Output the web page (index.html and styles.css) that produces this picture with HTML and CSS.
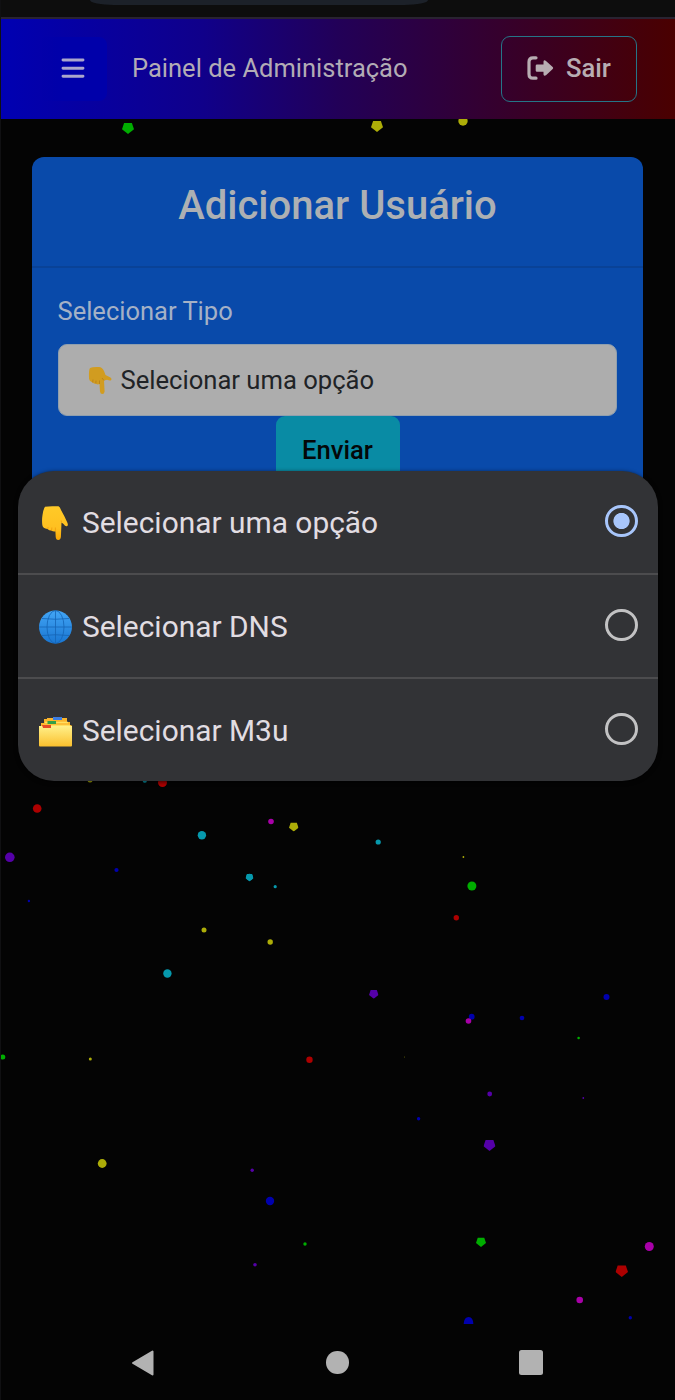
FILE: index.html
```
<!DOCTYPE html>
<html lang="pt-BR">
<head>
<meta charset="utf-8">
<title>Painel de Administração</title>
<link rel="stylesheet" href="styles.css">
</head>
<body>
<svg width="0" height="0" class="defs" aria-hidden="true">
  <defs>
    <linearGradient id="skin" x1="0" y1="0" x2="0" y2="1"><stop offset="0" stop-color="#ffca28"/><stop offset=".65" stop-color="#ffc020"/><stop offset="1" stop-color="#f9a704"/></linearGradient>
    <linearGradient id="sea" x1="0" y1="0" x2="0" y2="1"><stop offset="0" stop-color="#42a5f5"/><stop offset="1" stop-color="#1976d2"/></linearGradient>
    <linearGradient id="paper" x1="0" y1="0" x2="0" y2="1"><stop offset="0" stop-color="#fff08a"/><stop offset="1" stop-color="#fbc02d"/></linearGradient>
    <symbol id="hand" viewBox="0 0 27 34">
      <path d="M3.500 .8Q8 0 14 .3H17Q18.500 1 19.500 4L23 10.500L26 17Q27 20 25.300 20.200Q23.800 20.500 22 18L20 16.500L19.400 31Q19 34 16.700 34Q14.500 34 14.200 31L13.900 25.200Q12 25.800 9.800 24.500Q7.500 24.500 6 23Q1.200 22.500 .8 19Q.2 14 1 9Q1.500 4 3.500 .8Z" fill="url(#skin)"/>
      <path d="M6 23Q6.800 22 6.500 21M9.800 24.500Q10.500 23 10.300 21.500M13.900 25.200V21.500M20 16.500L19.700 14.500" fill="none" stroke="#f0a010" stroke-width=".9"/>
    </symbol>
    <symbol id="pent" viewBox="-1 -1 2 2"><path d="M0 1L1 .2L.65 -.85H-.65L-1 .2Z" fill="currentColor"/></symbol>
  </defs>
</svg>
<div class="screen">
  <svg class="particles" viewBox="0 0 675 1400" aria-hidden="true">
    <g class="green">
      <use href="#pent" x="122" y="122" width="12" height="12"/>
      <use href="#pent" x="476" y="1237" width="10" height="10"/>
      <circle cx="471.900" cy="886" r="4.500"/><circle cx="2.800" cy="1057" r="2.500"/><circle cx="578.600" cy="1038" r="1.300"/><circle cx="305" cy="1244" r="1.700"/>
    </g>
    <g class="yellow">
      <use href="#pent" x="371" y="120" width="12" height="12"/>
      <use href="#pent" x="289" y="822" width="9.500" height="9.500"/>
      <circle cx="463" cy="121" r="4.700"/><circle cx="90" cy="780" r="2.500"/><circle cx="463.400" cy="857" r=".9"/><circle cx="204" cy="930" r="2.500"/><circle cx="270.200" cy="942" r="2.700"/><circle cx="90.300" cy="1059" r="1.500"/><circle cx="102.200" cy="1163.500" r="4.400"/><circle cx="404.500" cy="1057" r=".4"/>
    </g>
    <g class="cyan">
      <circle cx="144.800" cy="780.500" r="2.200"/><circle cx="201.900" cy="835.300" r="4.200"/><circle cx="378.200" cy="842" r="2.600"/><use href="#pent" x="245.500" y="873.500" width="8" height="8"/><circle cx="249.500" cy="877" r="3.200"/><circle cx="275.200" cy="886.700" r="1.600"/><circle cx="167.400" cy="973.500" r="4.200"/>
    </g>
    <g class="red">
      <circle cx="162.500" cy="782.500" r="4.500"/><circle cx="37.200" cy="808.500" r="4.300"/><circle cx="456.300" cy="917.800" r="2.700"/><circle cx="309.500" cy="1059.700" r="3.200"/><use href="#pent" x="615.500" y="1264.500" width="12.500" height="12.500"/>
    </g>
    <g class="purple">
      <circle cx="9.800" cy="857.300" r="4.800"/><use href="#pent" x="369" y="989.300" width="9.500" height="9.500"/><circle cx="489.700" cy="1094" r="2.400"/><circle cx="583.300" cy="1098" r=".9"/><use href="#pent" x="483.500" y="1139" width="12" height="12"/><circle cx="252.200" cy="1170.300" r="1.700"/><circle cx="255" cy="1264.700" r="1.800"/>
    </g>
    <g class="blue">
      <circle cx="116.500" cy="870" r="2.100"/><circle cx="28.900" cy="901" r="1.200"/><circle cx="606.500" cy="997" r="3"/><circle cx="471.700" cy="1016.700" r="2.900"/><circle cx="522" cy="1018" r="2.300"/><circle cx="418.600" cy="1118.700" r="1.700"/><circle cx="270" cy="1201" r="4.200"/><path d="M463.700 1324Q464 1317 468.700 1317Q473 1317 473.400 1324Z"/><circle cx="630.300" cy="1317.700" r="1.700"/>
    </g>
    <g class="magenta">
      <circle cx="271" cy="821.500" r="2.800"/><circle cx="468.500" cy="1021" r="2.800"/><circle cx="649.300" cy="1246.500" r="4.500"/><circle cx="579.700" cy="1300" r="3.300"/>
    </g>
  </svg>

  <div class="browser-bar"><div class="address"></div></div>
  <header class="topbar">
    <button class="menu" aria-label="Menu">
      <svg width="24" height="20" viewBox="0 0 24 20"><path d="M2 2H22M2 10.200H22M2 18.300H22" stroke="currentColor" stroke-width="2.900" stroke-linecap="round"/></svg>
    </button>
    <div class="brand">Painel de Administração</div>
    <button class="logout">
      <svg width="27" height="24" viewBox="0 0 27 24" fill="none"><path d="M9 1.800H6Q2 1.800 2 6V18Q2 22.200 6 22.200H9" stroke="currentColor" stroke-width="3.200" stroke-linecap="round"/><path d="M10 8.500H16.500V5.500Q17 3.500 19 5L25.700 11Q26.700 12 25.700 13L19 19.300Q17 20.500 16.500 18.500V15.800H10Q8.700 15.800 8.700 14.500V9.800Q8.700 8.500 10 8.500Z" fill="currentColor"/></svg>
      <span>Sair</span>
    </button>
  </header>

  <main class="card">
    <h1 class="card-title">Adicionar Usuário</h1>
    <div class="card-body">
      <div class="label">Selecionar Tipo</div>
      <div class="select">
        <svg class="select-icon" width="26" height="28" viewBox="0 0 26 28"><path d="M3 2Q6 .5 12 1Q15 1 17 5L18.500 9L23.500 11.500Q25.500 13 24 14.200Q23 15 20 13.700L17 14.500L17.600 25.500Q17.300 28 15.300 28Q13.300 28 13 25.500L12.500 18Q10.500 19 8.700 17.500Q7 18 5.700 16.500Q1.500 15 2 11Q1.700 4 3 2Z" fill="#d19c20"/><path d="M5.700 16.500L6 13.500M8.800 17.500L9 14.500M12.500 18V14.500M17 14.500L15 12" stroke="#bd8418" fill="none"/></svg>
        <span>Selecionar uma opção</span>
      </div>
      <button class="submit">Enviar</button>
    </div>
  </main>

  <nav class="system-nav">
    <svg width="24" height="28" viewBox="0 0 24 28"><path d="M2 14L21.500 2.500V25.500Z" fill="currentColor" stroke="currentColor" stroke-width="2" stroke-linejoin="round"/></svg>
    <div class="home"></div>
    <div class="recent"></div>
  </nav>

  <div class="picker">
    <div class="option">
      <svg class="emoji" width="35" height="36" viewBox="0 0 35 36"><use href="#hand" x="3.500" y="1" width="27" height="34"/></svg>
      <span class="option-text">Selecionar uma opção</span><span class="radio checked"></span>
    </div>
    <div class="option">
      <svg class="emoji" width="35" height="36" viewBox="0 0 35 36"><circle cx="17.500" cy="18" r="16.500" fill="url(#sea)"/><g fill="none" stroke="#1565b5" stroke-width=".8"><path d="M17.500 1.500V34.500M1 18H34M4 9.500Q17.500 11 31 9.500M4 26.500Q17.500 25 31 26.500"/><ellipse cx="17.500" cy="18" rx="8.500" ry="16.500"/></g></svg>
      <span class="option-text">Selecionar DNS</span><span class="radio"></span>
    </div>
    <div class="option">
      <svg class="emoji" width="35" height="36" viewBox="0 0 35 36"><path d="M3 13V10H6V6H9V5H29V9H32V12H33.500V16H2Z" fill="#fbb52b"/><path d="M7 9.500H30M5 12.500H32" stroke="#ffdf60" stroke-width="1.500"/><path d="M15 4H24V7H15Z" fill="#3d7de0"/><path d="M9.500 8H18V11H9.500Z" fill="#34a047"/><path d="M1 13H34V32.500Q34 33.500 33 33.500H2Q1 33.500 1 32.500Z" fill="url(#paper)"/><path d="M4 12H13V15H5Z" fill="#e84b25"/></svg>
      <span class="option-text">Selecionar M3u</span><span class="radio"></span>
    </div>
  </div>
</div>
</body>
</html>
```
FILE: styles.css
```
* { box-sizing: border-box; }
body { margin: 0; background: #040404; font-family: Roboto, "Liberation Sans", sans-serif; }
button { font: inherit; margin: 0; padding: 0; border: 0; }
svg { display: block; flex: none; }
.defs { position: absolute; }
.screen { position: relative; width: 675px; height: 1400px; overflow: hidden; display: flex; flex-direction: column; border-left: 1px solid #101012; background: #040404; }
.particles { position: absolute; top: 0; left: -1px; width: 675px; height: 1400px; }
.green { color: #00ad00; fill: #00ad00; }
.yellow { color: #adad08; fill: #adad08; }
.cyan { color: #0699ad; fill: #0699ad; }
.red { color: #ad0000; fill: #ad0000; }
.purple { color: #5500a8; fill: #5500a8; }
.blue { color: #0000ad; fill: #0000ad; }
.magenta { color: #a800a8; fill: #a800a8; }

.browser-bar { height: 19px; flex: none; background: #0d0d0d; border-bottom: 2px solid #292331; padding-left: 89px; }
.address { width: 338px; height: 4.500px; background: #1c2129; border-radius: 0 0 24px 24px / 0 0 5px 5px; }
.topbar { position: relative; height: 100px; flex: none; display: flex; align-items: center; margin-left: -1px; padding: 0 38px; background: linear-gradient(90deg, #0000b2 0%, #10008a 30%, #220058 50%, #36002b 75%, #4a0000 100%); color: #b2acb5; }
.menu { width: 69px; height: 64px; padding-bottom: 3px; border-radius: 8px; background: linear-gradient(90deg, #0000aa00, #0000aa 35%); color: #aaa6cc; display: flex; align-items: center; justify-content: center; }
.brand { margin-left: 25px; padding-bottom: 2px; font-size: 25.500px; line-height: 36px; white-space: nowrap; }
.logout { margin-left: auto; width: 136px; height: 66px; border: 1.500px solid #257587; border-radius: 9px; background: transparent; color: #b8adb2; font-size: 25.600px; font-weight: 500; display: flex; align-items: center; gap: 12px; padding: 0 0 2px 25px; }

.card { position: relative; margin: 38px 32px 0 31px; height: 350px; flex: none; background: #094aaa; border-radius: 12px; }
.card-title { height: 110.500px; margin: 0; padding-top: 24px; border-bottom: 2px solid #094297; text-align: center; font-size: 40px; line-height: 50px; font-weight: 500; color: #adb0b3; }
.card-body { padding: 23px 26px; display: flex; flex-direction: column; }
.label { font-size: 25.500px; line-height: 40px; color: #a4b1c6; margin-left: -.5px; }
.select { height: 72px; margin-top: 13.500px; border: 1.500px solid #8f9fae; border-radius: 9px; background: #adadad; color: #202326; display: flex; align-items: center; gap: 8px; padding-left: 27.500px; font-size: 25.600px; }
.submit { align-self: center; width: 124px; height: 68px; border-radius: 9px; background: #098ba4; color: #040708; font-size: 25.600px; font-weight: 500; }

.system-nav { position: absolute; left: 0; right: 0; bottom: 0; height: 75px; display: flex; align-items: center; justify-content: space-between; padding: 0 132px 0 130px; color: #b2b2b2; background: #040404; }
.home { width: 22.500px; height: 22.500px; margin-left: 1px; border-radius: 50%; background: #b2b2b2; }
.recent { width: 24.500px; height: 24.500px; border-radius: 2.500px; background: #b2b2b2; }

.picker { position: absolute; left: 17px; top: 471px; width: 640px; height: 309.500px; border-radius: 36px; background: #323336; overflow: hidden; box-shadow: 0 1px 4px #000a; }
.option { height: 104px; display: flex; align-items: center; padding: 0 20.500px 0 20px; border-bottom: 2px solid #4c4c4e; color: #e1dde2; }
.option:last-child { border-bottom: 0; height: 102px; }
.emoji { margin-top: 2px; }
.option-text { margin: 2px 0 0 9px; font-size: 29.900px; line-height: 40px; }
.radio { width: 32.500px; height: 32.500px; margin: -2px 0 0 auto; border: 3.500px solid #c2c2c3; border-radius: 50%; }
.checked { border-color: #a8c6fb; background: radial-gradient(circle, #a8c6fb 7.700px, transparent 8.500px); }
```
